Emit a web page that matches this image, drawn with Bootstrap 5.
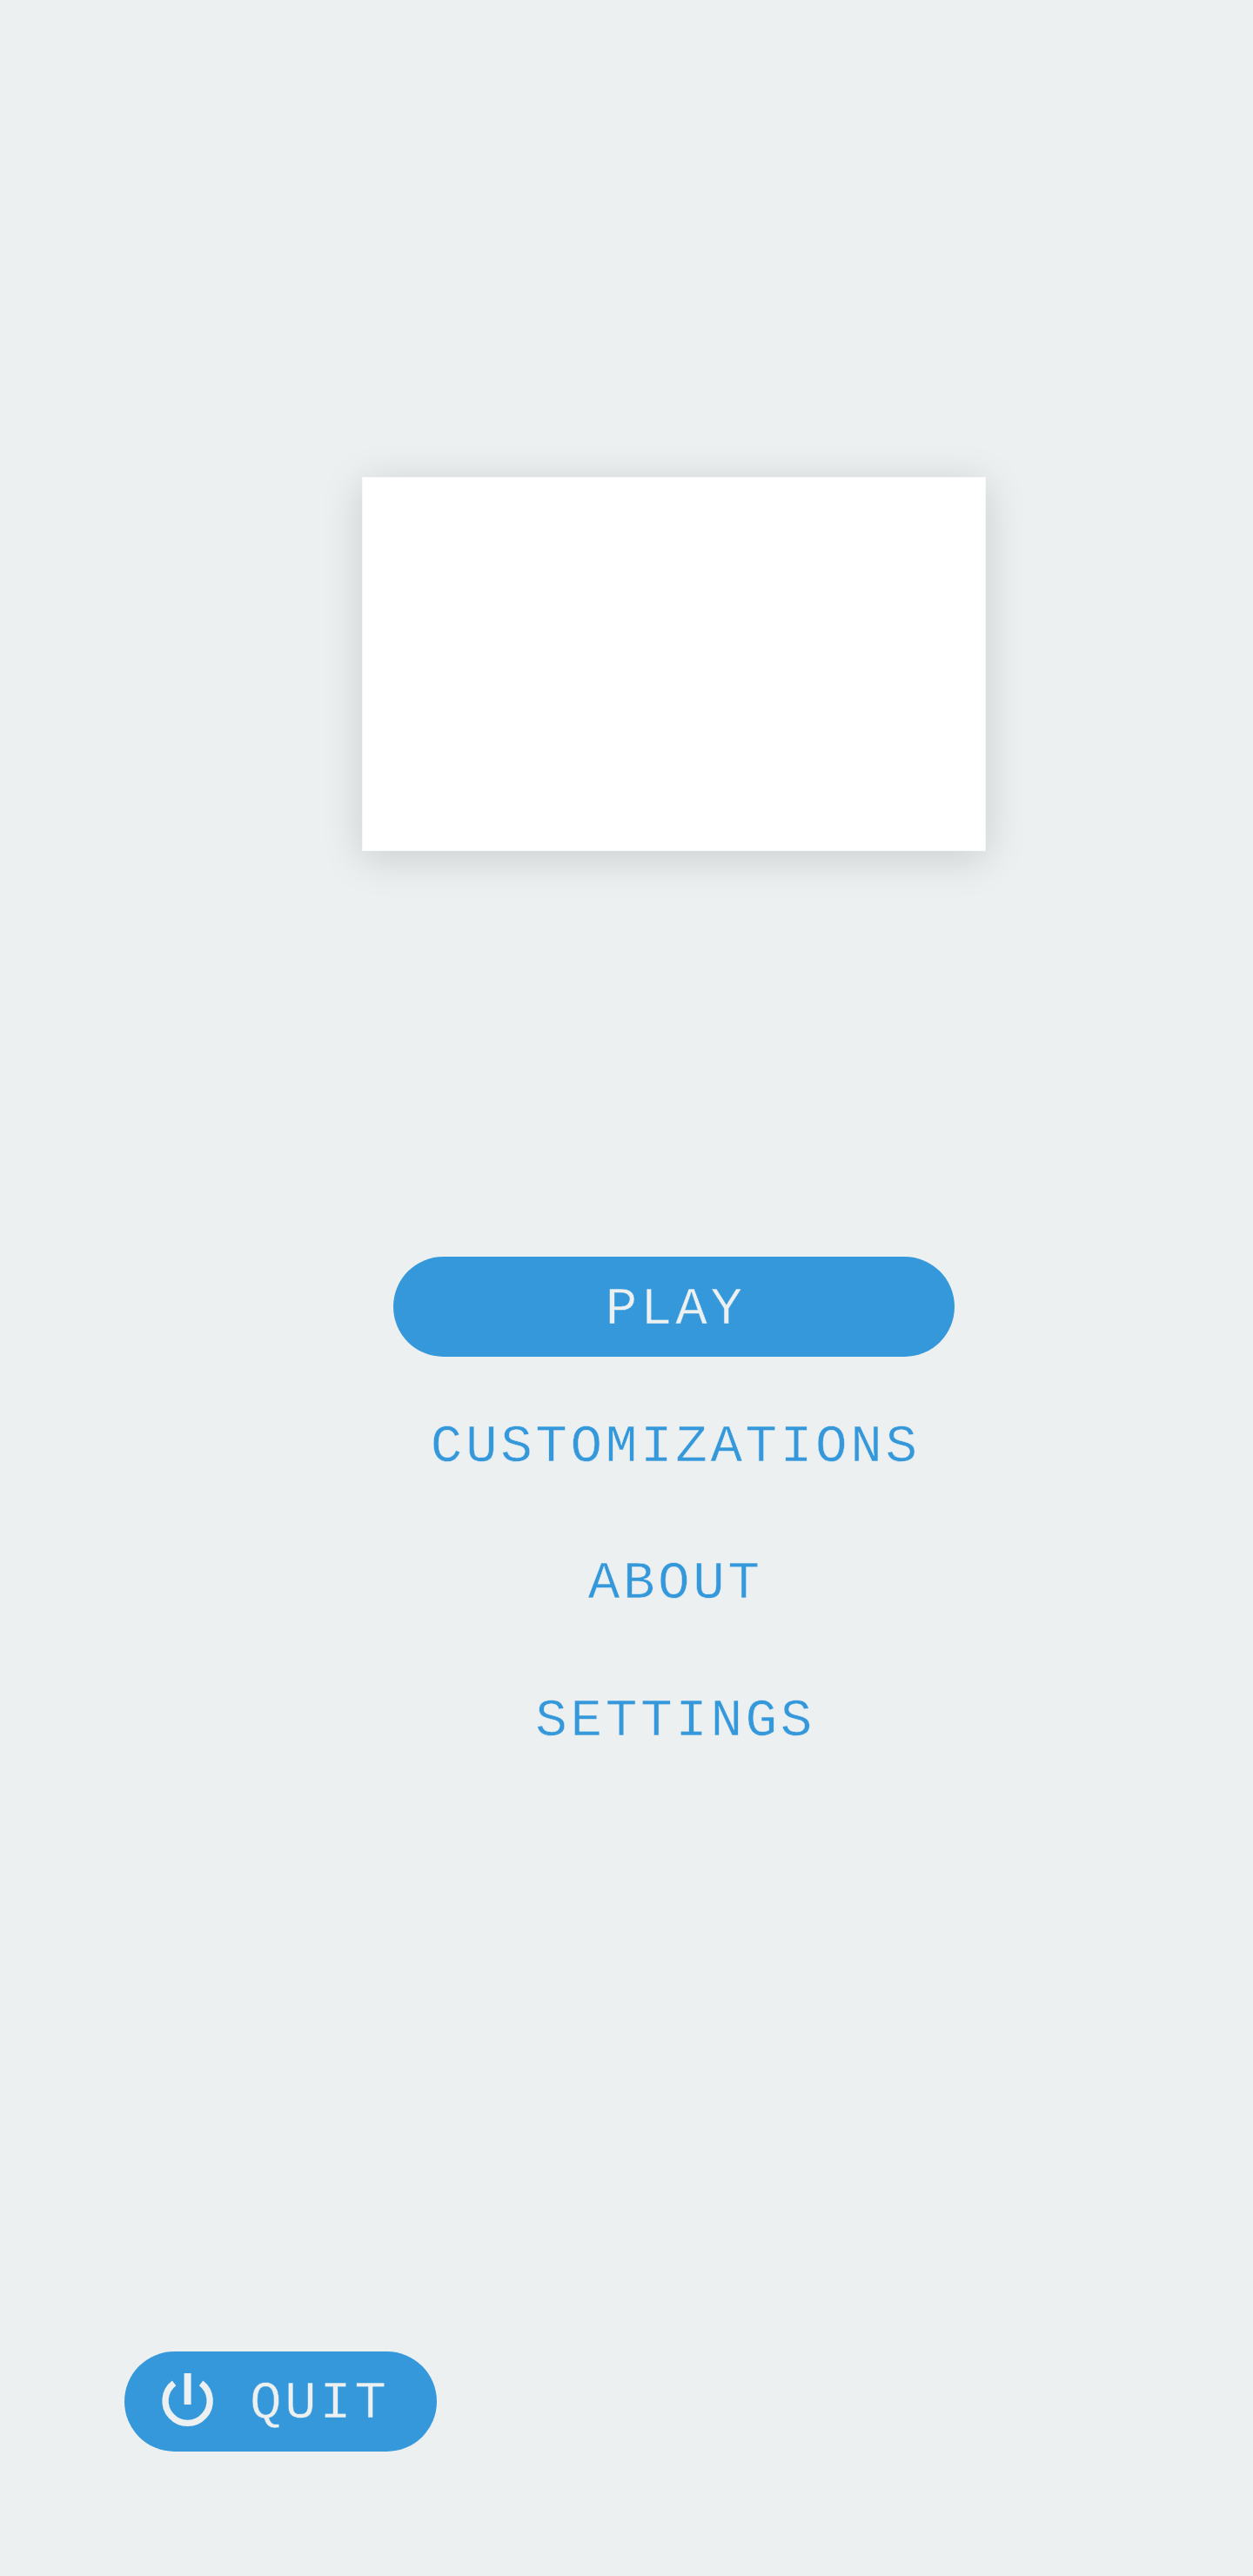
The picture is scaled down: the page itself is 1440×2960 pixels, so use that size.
<!DOCTYPE html>
<html lang="en">
<head>
<meta charset="utf-8">
<meta name="viewport" content="width=device-width, initial-scale=1">
<title>Main menu</title>
<link href="https://cdn.jsdelivr.net/npm/bootstrap@5.3.0/dist/css/bootstrap.min.css" rel="stylesheet">
<style>
  :root { --menu-blue: #3498db; --menu-bg: #ecf0f1; }
  body { background: var(--menu-bg); font-family: "Liberation Mono", monospace; }
  .screen { height: 2960px; padding: 548px 0 143.5px 143.4px; }
  .menu-column { width: 1262px; }
  .preview { width: 717px; height: 430px; border: 1px solid #f7f8f8; border-radius: 0; background: #fff;
    box-shadow: 0 8px 44px rgba(0, 0, 0, .15); }
  .menu-list { margin-top: 465.5px; gap: 42.5px; }
  .menu-btn { --bs-btn-padding-x: 0; --bs-btn-padding-y: 0; --bs-btn-border-width: 0;
    --bs-btn-color: var(--menu-blue); --bs-btn-hover-color: var(--menu-blue);
    width: 645px; height: 115px; font-size: 61px; line-height: 1; letter-spacing: 3.6px;
    -webkit-text-stroke: .5px var(--menu-bg); }
  .menu-btn.filled { background: var(--menu-blue); color: var(--menu-bg); -webkit-text-stroke-color: var(--menu-blue); }
  .caption { margin-right: -3.6px; padding-top: 7px; }
  .quit-btn { width: 359px; padding-left: 42px; }
  .quit-btn .caption { margin-left: 39.5px; padding-top: 5px; }
</style>
</head>
<body>
<main class="screen d-flex flex-column justify-content-between align-items-start">
  <div class="menu-column d-flex flex-column align-items-center">
    <div class="card preview"></div>
    <nav class="menu-list d-flex flex-column align-items-center">
      <button type="button" class="btn menu-btn filled rounded-pill d-flex align-items-center justify-content-center"><span class="caption">PLAY</span></button>
      <button type="button" class="btn menu-btn d-flex align-items-center justify-content-center"><span class="caption">CUSTOMIZATIONS</span></button>
      <button type="button" class="btn menu-btn d-flex align-items-center justify-content-center"><span class="caption">ABOUT</span></button>
      <button type="button" class="btn menu-btn d-flex align-items-center justify-content-center"><span class="caption">SETTINGS</span></button>
    </nav>
  </div>
  <button type="button" class="btn menu-btn filled quit-btn rounded-pill d-flex align-items-center justify-content-start">
    <svg width="62" height="62" viewBox="0 0 62 62" fill="none" stroke="#ecf0f1" overflow="visible" aria-hidden="true">
      <path d="M15.1 10.4A25.6 25.6 0 1 0 46.1 10.4" stroke-width="7.4"/>
      <path d="M30.6 -1V35" stroke-width="8"/>
    </svg>
    <span class="caption">QUIT</span>
  </button>
</main>
<script src="https://cdn.jsdelivr.net/npm/bootstrap@5.3.0/dist/js/bootstrap.bundle.min.js"></script>
</body>
</html>
